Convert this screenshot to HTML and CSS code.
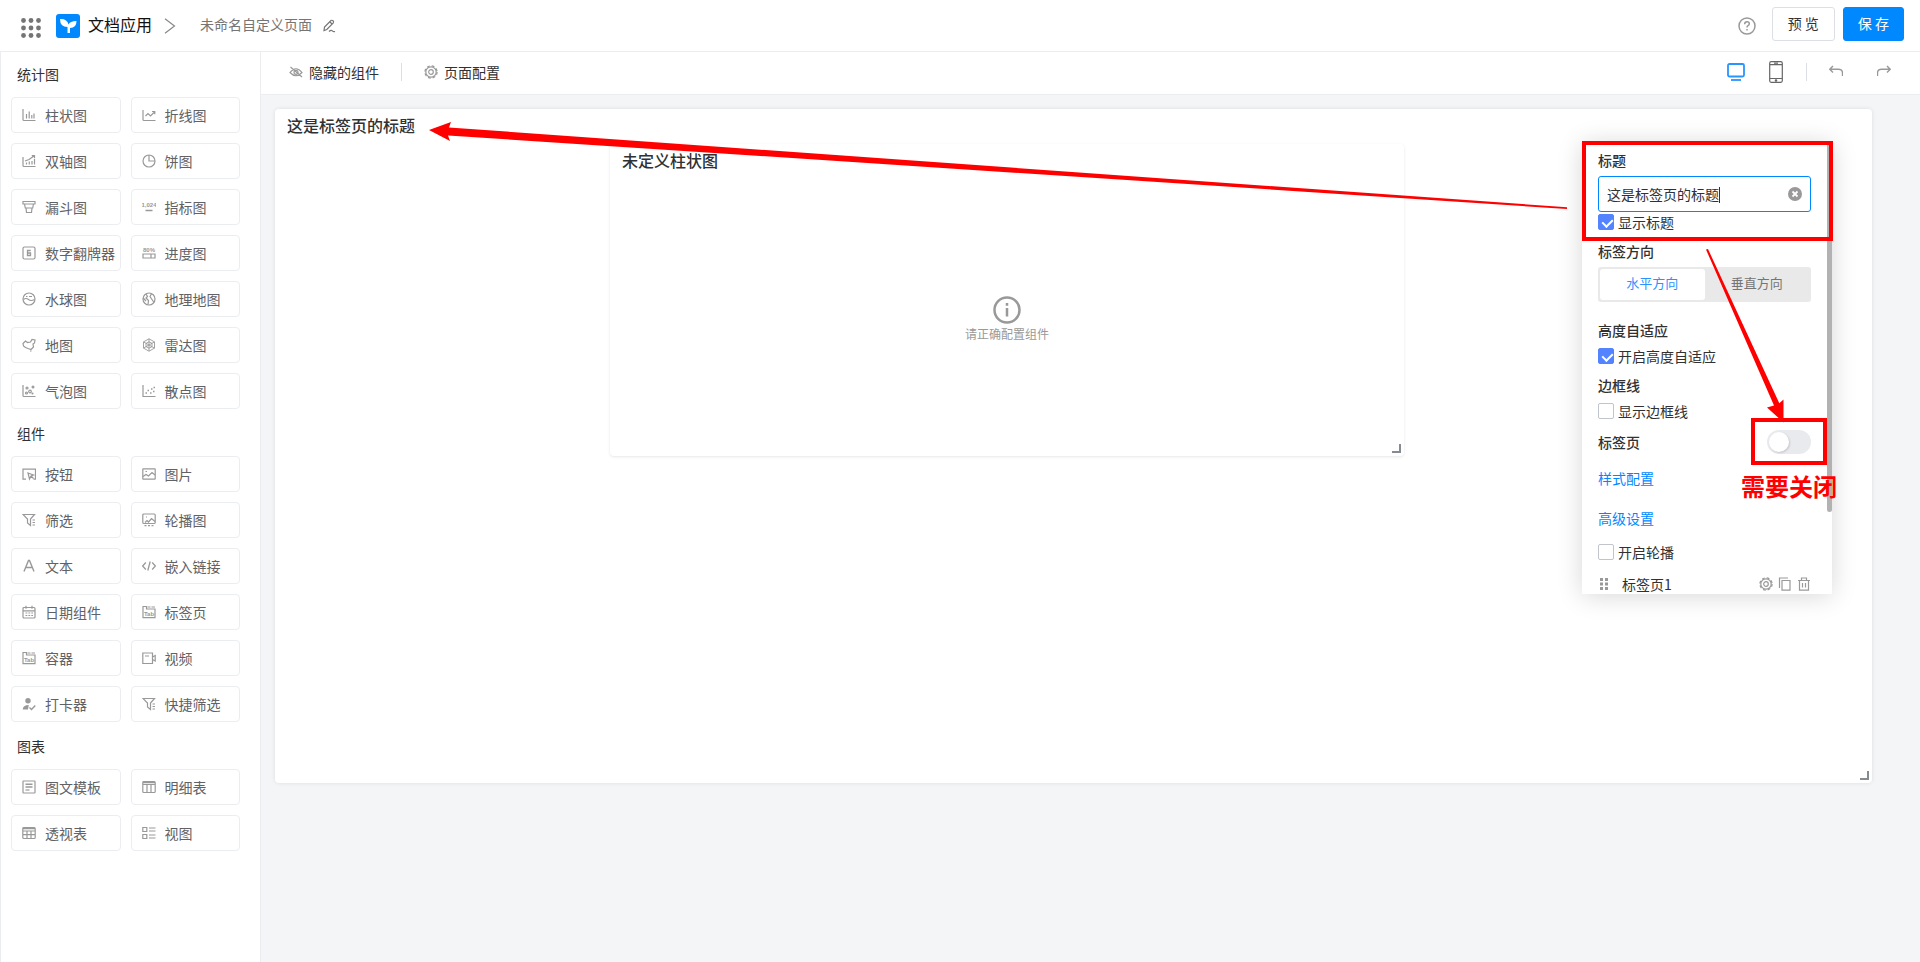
FILE: index.html
```html
<!DOCTYPE html>
<html lang="zh-CN">
<head>
    <meta charset="utf-8">
    <title>未命名自定义页面</title>
    <link rel="stylesheet" href="styles.css">
</head>
<body>
    <!-- icon sprite -->
    <svg class="sprite" width="0" height="0">
        <symbol id="bar" viewBox="0 0 14 14"><path d="M1 1v10.500q0 1 1 1h11.500M4.500 6v4.500M7.200 3.500v7M9.800 7v3.500M12 5.500v5"/></symbol>
        <symbol id="line" viewBox="0 0 14 14"><path d="M1 2v9.500q0 1 1 1h11.500M3.500 8l2.500-2.500 2.500 2.500 4-4M10 3.500h2.800v2.800"/></symbol>
        <symbol id="dual" viewBox="0 0 14 14"><path d="M1 3v8.500q0 1 1 1h11.500M4.500 8.500v2M7.300 7.500v3M10 7v3.500M12.500 5v5.500M3 7l4-1.500 5-3.500M9.800 1.700h2.700v2.500"/></symbol>
        <symbol id="pie" viewBox="0 0 14 14"><circle cx="7" cy="7" r="6"/><path d="M7 1v6h6"/></symbol>
        <symbol id="funnel" viewBox="0 0 14 14"><path d="M1 1.500h12v2.500H1zM2.500 4l.8 4h7.400l.8-4M4 8l.5 4.500h5L10 8"/></symbol>
        <symbol id="flip" viewBox="0 0 14 14"><rect x="1" y="1" width="12" height="12" rx="1.500"/><path d="M8.700 4.500H5.500v5h3V7h-3" stroke-width="1.300"/></symbol>
        <symbol id="ball" viewBox="0 0 14 14"><circle cx="7" cy="7" r="6"/><path d="M1.500 7.500q2.500-2 5 0t6 0M4 4.500h1.500M7 4.500h3"/></symbol>
        <symbol id="globe" viewBox="0 0 14 14"><circle cx="7" cy="7" r="6"/><path d="M4 2l1.500 2.500L4 6l2.500 2.500L6 12.500M9.500 1.800L8 4.500l4 6M1.200 6l2.800 3"/></symbol>
        <symbol id="map" viewBox="0 0 14 14"><path d="M1 5.500l2.500-2.500 2 1.500 3-.5 1.500-2.500 3 .5-.5 3-1.500 1 .5 3-2.500 2.500-3-1-2.500-1-2-1.500zM8 13h1.500"/></symbol>
        <symbol id="radar" viewBox="0 0 14 14"><path d="M7 .8l5.500 3.100v6.200L7 13.200l-5.500-3.100V3.900zM7 3.800l3 1.600v3.200l-3 1.600-3-1.600V5.400zM7 .8v12.400M1.500 3.900l11 6.200M12.500 3.900l-11 6.200" stroke-width=".9"/></symbol>
        <symbol id="bubble" viewBox="0 0 14 14"><path d="M1 1v10.500q0 1 1 1h11.500"/><circle cx="5" cy="4" r="1"/><circle cx="4.500" cy="9" r="1"/><circle cx="8" cy="7.500" r="1.300"/><circle cx="11" cy="3" r=".9"/><circle cx="10.500" cy="9.500" r=".5"/></symbol>
        <symbol id="scatter" viewBox="0 0 14 14"><path d="M1 1v11.500h12.500"/><path d="M3.500 9h1.500M5.500 6.500h1.500M8 9h1.500M9 5h1.500M11 7.500h1.500M11.500 3.500H13" stroke-width="1.500"/></symbol>
        <symbol id="button" viewBox="0 0 14 14"><path d="M4 12.200H1v-10h12.500v10h-2M6 6l5.500 2-2.500 1-1.500 3zM9 9l2.500 2.500"/></symbol>
        <symbol id="picture" viewBox="0 0 14 14"><rect x=".8" y="1.800" width="12.400" height="10.400" rx=".5"/><path d="M1 9.500l3-2 2.500 1.500 3.500-3.500 3 2.500M3.500 4.500H5"/></symbol>
        <symbol id="filter" viewBox="0 0 14 14"><path d="M1 1.500h11.500L8.500 6v6.500L5.500 10V6zM10.500 7H13M10.500 9.500H13M10.500 12H13"/></symbol>
        <symbol id="carousel" viewBox="0 0 14 14"><rect x=".8" y="1" width="12.400" height="9.500" rx="1"/><path d="M3 9.500l2-2 1.500 1.500L9.500 5.500l3.500 3M4 4h1M2.500 12.700h2M6 12.700h2M9.500 12.700h2"/></symbol>
        <symbol id="text" viewBox="0 0 14 14"><path d="M2 12.500L6.500 1.500h1l4.500 11M3.800 8.500h6.500" stroke-width="1.400"/></symbol>
        <symbol id="code" viewBox="0 0 14 14"><path d="M3.800 3.500L.6 7l3.200 3.500M10.200 3.500L13.400 7l-3.200 3.500M8.200 2.500l-2.400 9" stroke-width="1.300"/></symbol>
        <symbol id="date" viewBox="0 0 14 14"><rect x="1" y="2.500" width="12" height="10.500" rx="1"/><path d="M1 5.800h12M4 .8v3M10 .8v3"/><path d="M3.500 8h7.500M3.500 10.500h7.500" stroke-dasharray="1.800 1.100"/></symbol>
        <symbol id="video" viewBox="0 0 14 14"><path d="M.8 2h9.700v10.500H.8zM10.500 6l2.700-1.500v5.500l-2.700-1.500M3 5h4"/></symbol>
        <symbol id="punch" viewBox="0 0 14 14"><circle cx="6" cy="3.800" r="2.700" class="solid"/><path d="M.8 12.500q0-4.500 6-4.500L6 12.500z" class="solid"/><path d="M7.500 10.500l2 2 3.800-4" stroke-width="1.400"/></symbol>
        <symbol id="template" viewBox="0 0 14 14"><rect x="1" y="1" width="12" height="12" rx=".5"/><path d="M3.500 4.300h7M3.500 7h7" stroke-width="1.600"/><path d="M3.500 10h4"/></symbol>
        <symbol id="detail" viewBox="0 0 14 14"><rect x=".8" y="1.500" width="12.400" height="11" rx="1"/><path d="M1 4.500h12M5 4.500v8M9 4.500v8"/><path d="M1 2.500h12" stroke-width="1.500"/></symbol>
        <symbol id="pivot" viewBox="0 0 14 14"><rect x=".8" y="1.500" width="12.400" height="11" rx="1"/><path d="M1 5h12M1 8.700h12M5 5v7.500M9 5v7.500"/><path d="M1 2.500h12" stroke-width="1.500"/></symbol>
        <symbol id="view" viewBox="0 0 14 14"><path d="M.8 1.500h4v4h-4zM.8 8.500h4v4h-4zM7 2h6.500M7 5h6.500M7 9h6.500M7 12h6.500"/></symbol>
        <symbol id="gear" viewBox="0 0 14 14"><circle cx="7" cy="7" r="5.200"/><circle cx="7" cy="7" r="6.100" stroke-dasharray="2.800 1.990"/><circle cx="7" cy="7" r="2.300"/></symbol>
        <symbol id="hide" viewBox="0 0 14 14"><path d="M1 7.500q6-7.500 12 0-6 6.500-12 0zM1.500 2l11.500 10"/><circle cx="7" cy="7.300" r="2"/></symbol>
        <symbol id="pencil" viewBox="0 0 14 14"><path d="M2 11.500l.5-3.500 6.500-6.500q1-.6 2 .3t.3 2L4.800 10.500zM8 3l2.300 2.200M7 12.500q2-2 3.300-.7t2.700.7"/></symbol>
        <symbol id="undo" viewBox="0 0 14 14"><path d="M4 1L.8 4.300 4 7.500M1 4.300h8.500q4 0 4 4V11" stroke-width="1.400"/></symbol>
        <symbol id="redo" viewBox="0 0 14 14"><path d="M10 1l3.200 3.300L10 7.500M13 4.300H4.500q-4 0-4 4V11" stroke-width="1.400"/></symbol>
        <symbol id="copy" viewBox="0 0 14 14"><path d="M4 3.500h8v9.700H4zM1.500 11V1h8.500"/></symbol>
        <symbol id="trash" viewBox="0 0 14 14"><path d="M1 3.500h12M4.500 3.500V1h5v2.500M2.500 3.500v9.700h9V3.500M5.500 6v4.500M8.500 6v4.500"/></symbol>
    </svg>

    <header class="header">
        <svg class="apps" viewBox="0 0 20 20"><g fill="#757575"><circle cx="2.500" cy="2.500" r="2.400"/><circle cx="10" cy="2.500" r="2.400"/><circle cx="17.500" cy="2.500" r="2.400"/><circle cx="2.500" cy="10" r="2.400"/><circle cx="10" cy="10" r="2.400"/><circle cx="17.500" cy="10" r="2.400"/><circle cx="2.500" cy="17.500" r="2.400"/><circle cx="10" cy="17.500" r="2.400"/><circle cx="17.500" cy="17.500" r="2.400"/></g></svg>
        <svg class="logo" viewBox="0 0 24 24"><rect width="24" height="24" rx="3" fill="#0089ff"/><path d="M4 5q7-.5 8.500 5.500Q14 7 20.500 7q0 7-6.500 7v5h-2.500v-6Q4 13 4 5z" fill="#fff"/></svg>
        <span class="app-name">文档应用</span>
        <svg class="crumb" viewBox="0 0 12 16"><path d="M1 .8l9.500 7.200L1 15.200"/></svg>
        <span class="page-name">未命名自定义页面</span>
        <svg class="icon edit"><use href="#pencil"/></svg>
        <div class="header-actions">
            <svg class="help" viewBox="0 0 18 18"><circle cx="9" cy="9" r="8"/><path d="M6.700 7.200q0-2.400 2.300-2.400t2.300 2q0 1.200-1.300 1.900-1 .6-1 1.900M9 12v1.500"/></svg>
            <button class="btn">预 览</button>
            <button class="btn btn-primary">保 存</button>
        </div>
    </header>

    <div class="layout">
        <aside class="sidebar">
            <h2 class="group-title">统计图</h2>
            <div class="group">
                <button class="item"><svg class="icon"><use href="#bar"/></svg>柱状图</button>
                <button class="item"><svg class="icon"><use href="#line"/></svg>折线图</button>
                <button class="item"><svg class="icon"><use href="#dual"/></svg>双轴图</button>
                <button class="item"><svg class="icon"><use href="#pie"/></svg>饼图</button>
                <button class="item"><svg class="icon"><use href="#funnel"/></svg>漏斗图</button>
                <button class="item"><svg class="icon" viewBox="0 0 14 14"><text x="7" y="6.500" class="tiny">1,024</text><path d="M3.500 10.500h7" stroke-width="1.500"/></svg>指标图</button>
                <button class="item"><svg class="icon"><use href="#flip"/></svg>数字翻牌器</button>
                <button class="item"><svg class="icon" viewBox="0 0 14 14"><text x="7" y="6" class="tiny">80%</text><path d="M1 8h12v4H1zM9 8v4"/></svg>进度图</button>
                <button class="item"><svg class="icon"><use href="#ball"/></svg>水球图</button>
                <button class="item"><svg class="icon"><use href="#globe"/></svg>地理地图</button>
                <button class="item"><svg class="icon"><use href="#map"/></svg>地图</button>
                <button class="item"><svg class="icon"><use href="#radar"/></svg>雷达图</button>
                <button class="item"><svg class="icon"><use href="#bubble"/></svg>气泡图</button>
                <button class="item"><svg class="icon"><use href="#scatter"/></svg>散点图</button>
            </div>
            <h2 class="group-title">组件</h2>
            <div class="group">
                <button class="item"><svg class="icon"><use href="#button"/></svg>按钮</button>
                <button class="item"><svg class="icon"><use href="#picture"/></svg>图片</button>
                <button class="item"><svg class="icon"><use href="#filter"/></svg>筛选</button>
                <button class="item"><svg class="icon"><use href="#carousel"/></svg>轮播图</button>
                <button class="item"><svg class="icon"><use href="#text"/></svg>文本</button>
                <button class="item"><svg class="icon"><use href="#code"/></svg>嵌入链接</button>
                <button class="item"><svg class="icon"><use href="#date"/></svg>日期组件</button>
                <button class="item"><svg class="icon" viewBox="0 0 14 14"><path d="M1 1.500h3.500V4H13v8.700H1zM5.500 2H8.500M9.500 2H13"/><text x="7" y="10.500" class="tiny">Tab</text></svg>标签页</button>
                <button class="item"><svg class="icon" viewBox="0 0 14 14"><path d="M1 1.500h3.500V4H13v8.700H1zM5.500 2H8.500M9.500 2H13"/><text x="7" y="10.500" class="tiny">Tab</text></svg>容器</button>
                <button class="item"><svg class="icon"><use href="#video"/></svg>视频</button>
                <button class="item"><svg class="icon"><use href="#punch"/></svg>打卡器</button>
                <button class="item"><svg class="icon"><use href="#filter"/></svg>快捷筛选</button>
            </div>
            <h2 class="group-title">图表</h2>
            <div class="group">
                <button class="item"><svg class="icon"><use href="#template"/></svg>图文模板</button>
                <button class="item"><svg class="icon"><use href="#detail"/></svg>明细表</button>
                <button class="item"><svg class="icon"><use href="#pivot"/></svg>透视表</button>
                <button class="item"><svg class="icon"><use href="#view"/></svg>视图</button>
            </div>
        </aside>

        <main class="main">
            <div class="toolbar">
                <button class="tool"><svg class="icon"><use href="#hide"/></svg>隐藏的组件</button>
                <span class="divider"></span>
                <button class="tool"><svg class="icon"><use href="#gear"/></svg>页面配置</button>
                <div class="toolbar-right">
                    <button class="tool" aria-label="电脑"><svg class="device-pc" viewBox="0 0 18 18"><rect x="1" y="1" width="16" height="12.500" rx="1.500"/><path d="M4 17h10"/></svg></button>
                    <button class="tool" aria-label="手机"><svg class="device-phone" viewBox="0 0 14 22"><rect x=".7" y=".7" width="12.600" height="20.600" rx="1.500"/><path d="M1 3.700h12M1 17.500h12M5 2.200h4"/><circle cx="7" cy="19.500" r=".7"/></svg></button>
                    <span class="divider"></span>
                    <button class="tool" aria-label="撤销"><svg class="icon"><use href="#undo"/></svg></button>
                    <button class="tool" aria-label="重做"><svg class="icon"><use href="#redo"/></svg></button>
                </div>
            </div>

            <div class="canvas">
                <section class="card tabs-card">
                    <h3 class="card-title">这是标签页的标题</h3>
                    <div class="card-grid">
                        <section class="card chart-card">
                            <h3 class="card-title">未定义柱状图</h3>
                            <div class="empty">
                                <svg class="info" viewBox="0 0 28 28"><circle cx="14" cy="14" r="12.500"/><path d="M14 7v2.700M14 12v8.500"/></svg>
                                <p class="empty-text">请正确配置组件</p>
                            </div>
                            <span class="resize"></span>
                        </section>
                    </div>
                    <span class="resize"></span>

                    <!-- settings panel -->
                    <div class="panel">
                        <label class="label" for="title">标题</label>
                        <div class="title-box">
                            <input class="title-input" type="text" id="title" value="这是标签页的标题">
                            <span class="caret"></span>
                            <svg class="clear" viewBox="0 0 14 14"><circle cx="7" cy="7" r="7" fill="#999"/><path d="M4.500 4.500l5 5M9.500 4.500l-5 5" stroke="#fff" stroke-width="1.800"/></svg>
                        </div>
                        <label class="check"><input type="checkbox" checked>显示标题</label>
                        <div class="label">标签方向</div>
                        <div class="segment">
                            <button class="segment-item active">水平方向</button>
                            <button class="segment-item">垂直方向</button>
                        </div>
                        <div class="label">高度自适应</div>
                        <label class="check"><input type="checkbox" checked>开启高度自适应</label>
                        <div class="label">边框线</div>
                        <label class="check"><input type="checkbox">显示边框线</label>
                        <div class="switch-row">
                            <label class="label" for="tabs">标签页</label>
                            <input class="switch" type="checkbox" id="tabs">
                        </div>
                        <a class="link" href="#">样式配置</a>
                        <a class="link" href="#">高级设置</a>
                        <label class="check"><input type="checkbox">开启轮播</label>
                        <div class="tab-row">
                            <svg class="drag" viewBox="0 0 10 12"><path d="M1 0h3v3H1zM6 0h3v3H6zM1 4.500h3v3H1zM6 4.500h3v3H6zM1 9h3v3H1zM6 9h3v3H6z" fill="#999"/></svg>
                            <span class="tab-name">标签页1</span>
                            <svg class="icon"><use href="#gear"/></svg>
                            <svg class="icon"><use href="#copy"/></svg>
                            <svg class="icon"><use href="#trash"/></svg>
                        </div>
                        <span class="scrollbar"></span>
                    </div>
                </section>
            </div>
        </main>
    </div>

    <!-- red guide marks -->
    <svg class="marks" viewBox="0 0 1920 962">
        <g class="mark-box">
            <rect x="1584" y="143" width="247" height="96"/>
            <rect x="1753" y="420" width="72" height="43"/>
        </g>
        <path d="M429 130L451 122L449 127.500L1567 207.300V209L448 135.500L450 141z"/>
        <path d="M1706 249.500L1708 249L1779.300 403.300L1783.500 399.500V422.500L1767 407.500L1774 405.500z"/>
        <text class="mark-text" x="1741" y="496">需要关闭</text>
    </svg>
</body>
</html>
```
FILE: styles.css
```css
* {
    box-sizing: border-box;
}

body {
    background: #fff;
    color: #303133;
    display: flex;
    flex-direction: column;
    font-family: "Noto Sans CJK SC", sans-serif;
    font-size: 14px;
    line-height: 20px;
    margin: 0;
    min-height: 100vh;
    position: relative;
}

button,
input {
    color: inherit;
    font: inherit;
    margin: 0;
}

button {
    cursor: pointer;
}

h2,
h3,
p {
    margin: 0;
}

svg {
    display: block;
    flex: none;
}

.sprite {
    position: absolute;
}

.icon {
    color: #999;
    fill: none;
    height: 14px;
    stroke: currentColor;
    stroke-width: 1.2;
    width: 14px;
}

.solid {
    fill: currentColor;
    stroke: none;
}

.tiny {
    fill: currentColor;
    font-family: "Liberation Sans", sans-serif;
    font-size: 6px;
    font-weight: bold;
    stroke: none;
    text-anchor: middle;
}

/* header */

.header {
    align-items: center;
    border-bottom: 1px solid #ebedf0;
    display: flex;
    height: 52px;
    padding: 0 16px 0 21px;
}

.apps {
    height: 20px;
    margin: 5px 15px 0 0;
    width: 20px;
}

.logo {
    height: 24px;
    margin-right: 8px;
    width: 24px;
}

.app-name {
    color: #111;
    font-size: 16px;
    line-height: 24px;
    padding-bottom: 3px;
}

.crumb {
    fill: none;
    height: 16px;
    margin: 0 24px 0 12px;
    stroke: #888;
    stroke-width: 1.2;
    width: 12px;
}

.page-name {
    color: #757575;
    padding-bottom: 3px;
}

.edit {
    color: #757575;
    margin-left: 10px;
}

.header-actions {
    align-items: center;
    display: flex;
    gap: 8px;
    margin: 0 0 4px auto;
}

.help {
    fill: none;
    height: 18px;
    margin: 4px 8px 0 0;
    stroke: #999;
    stroke-width: 1.5;
    width: 18px;
}

.btn {
    background: #fff;
    border: 1px solid #dcdfe6;
    border-radius: 3px;
    height: 34px;
    padding: 0 15px 2px;
}

.btn-primary {
    background: #0089ff;
    border-color: #0089ff;
    color: #fff;
    padding: 0 14px 2px;
}

/* sidebar */

.layout {
    display: flex;
    flex: 1;
}

.sidebar {
    border: solid #ebedf0;
    border-width: 0 1px;
    flex: none;
    padding: 0 20px 20px 10px;
    width: 261px;
}

.group-title {
    font-size: 14px;
    font-weight: normal;
    padding: 14px 6px 13px;
}

.group-title:first-child {
    padding-top: 12px;
}

.group {
    display: grid;
    gap: 10px;
    grid-template-columns: 1fr 1fr;
}

.item {
    align-items: center;
    background: #fff;
    border: 1px solid #ebedf0;
    border-radius: 4px;
    color: #606266;
    display: flex;
    gap: 9px;
    height: 36px;
    padding: 0 0 0 10px;
    white-space: nowrap;
}

/* main area */

.main {
    background: #f4f5f7;
    flex: 1;
    min-width: 0;
}

.toolbar {
    align-items: center;
    background: #fff;
    border-bottom: 1px solid #ebedf0;
    display: flex;
    height: 43px;
    padding: 0 29px 2px 28px;
}

.tool {
    align-items: center;
    background: none;
    border: 0;
    display: flex;
    gap: 6px;
    padding: 0;
}

.divider {
    background: #dcdfe6;
    height: 18px;
    margin: 0 22px;
    width: 1px;
}

.toolbar-right {
    align-items: center;
    display: flex;
    margin-left: auto;
}

.toolbar-right .divider {
    margin-left: 23px;
}

.toolbar-right .tool + .tool {
    margin-left: 24px;
}

.toolbar-right .divider + .tool + .tool {
    margin-left: 34px;
}

.device-pc {
    fill: none;
    height: 18px;
    stroke: #2894ff;
    stroke-width: 1.8;
    width: 18px;
}

.device-phone {
    fill: none;
    height: 22px;
    stroke: #666;
    stroke-width: 1.2;
    width: 14px;
}

.canvas {
    padding: 14px 48px 48px 14px;
}

.card {
    background: #fff;
    border-radius: 4px;
    box-shadow: 0 0 4px rgba(0, 0, 0, 0.1);
    position: relative;
}

.card-title {
    font-size: 16px;
    font-weight: 500;
    line-height: 24px;
    padding: 4px 12px 7px;
}

.tabs-card {
    min-height: 674px;
}

.card-grid {
    display: grid;
    grid-template-columns: 335fr 794fr 468fr;
}

.chart-card {
    box-shadow: 0 1px 3px rgba(0, 0, 0, 0.1);
    display: flex;
    flex-direction: column;
    grid-column: 2;
    min-height: 312px;
}

.empty {
    align-items: center;
    color: #999;
    display: flex;
    flex: 1;
    flex-direction: column;
    justify-content: center;
    padding-top: 4px;
}

.info {
    fill: none;
    height: 28px;
    stroke: #999;
    stroke-width: 2.5;
    width: 28px;
}

.empty-text {
    font-size: 12px;
}

.resize {
    border: solid #868b92;
    border-width: 0 2px 2px 0;
    bottom: 3px;
    height: 9px;
    position: absolute;
    right: 3px;
    width: 9px;
}

/* settings panel */

.panel {
    background: #fff;
    box-shadow: 0 2px 24px rgba(0, 0, 0, 0.16);
    display: flex;
    flex-direction: column;
    height: 452px;
    overflow: hidden;
    padding: 8px 21px 0 16px;
    position: absolute;
    right: 40px;
    top: 33px;
    width: 250px;
}

.label {
    font-weight: 500;
    margin-bottom: 6px;
}

.title-box {
    position: relative;
}

.title-input {
    border: 1px solid #0089ff;
    border-radius: 3px;
    display: block;
    height: 36px;
    outline: none;
    padding: 0 30px 0 8px;
    width: 100%;
}

.caret {
    background: #303133;
    height: 16px;
    left: 121px;
    position: absolute;
    top: 11px;
    width: 1px;
}

.clear {
    height: 14px;
    position: absolute;
    right: 9px;
    top: 11px;
    width: 14px;
}

.check {
    align-items: center;
    display: flex;
    gap: 4px;
    margin-bottom: 9px;
}

.check input {
    appearance: none;
    background: #fff;
    border: 1px solid #c0c4cc;
    border-radius: 2px;
    height: 16px;
    width: 16px;
}

.check input:checked {
    background: #5383ff;
    border-color: #5383ff;
}

.check input:checked::after {
    border: solid #fff;
    border-width: 0 2px 2px 0;
    content: "";
    display: block;
    height: 8px;
    margin: 2px 0 0 5px;
    transform: rotate(45deg);
    width: 5px;
}

.segment {
    background: #e9e9e9;
    border-radius: 3px;
    display: flex;
    height: 35px;
    margin-bottom: 18px;
    padding: 2px;
}

.segment-item {
    background: none;
    border: 0;
    border-radius: 3px;
    color: #757575;
    flex: 1;
    font-size: 13px;
    padding: 0 0 3px;
}

.segment-item.active {
    background: #fff;
    color: #2894ff;
}

.switch-row {
    align-items: center;
    display: flex;
    justify-content: space-between;
    margin-bottom: 14px;
}

.switch-row .label {
    margin: 0;
}

.switch {
    appearance: none;
    background: #e9eaee;
    border-radius: 12px;
    height: 24px;
    padding: 2px;
    width: 44px;
}

.switch::before {
    background: #fff;
    border-radius: 50%;
    box-shadow: 1px 1px 2px rgba(0, 0, 0, 0.15);
    content: "";
    display: block;
    height: 20px;
    width: 20px;
}

.switch:checked::before {
    margin-left: auto;
}

.link {
    align-self: flex-start;
    color: #0089ff;
    margin-bottom: 20px;
    text-decoration: none;
}

.link + .check {
    margin-top: -6px;
}

.tab-row {
    align-items: center;
    display: flex;
    gap: 5px;
    margin-top: 3px;
}

.drag {
    height: 12px;
    width: 12px;
}

.tab-name {
    margin: 0 auto 0 7px;
}

.scrollbar {
    background: #b2b2b2;
    border-radius: 3px;
    height: 370px;
    position: absolute;
    right: 0;
    top: 0;
    width: 5px;
}

/* guide marks */

.marks {
    fill: #f00;
    left: 0;
    pointer-events: none;
    position: absolute;
    top: 0;
    width: 100%;
}

.mark-box {
    fill: none;
    stroke: #f00;
    stroke-width: 4;
}

.mark-text {
    font-size: 24px;
    font-weight: bold;
}
```
